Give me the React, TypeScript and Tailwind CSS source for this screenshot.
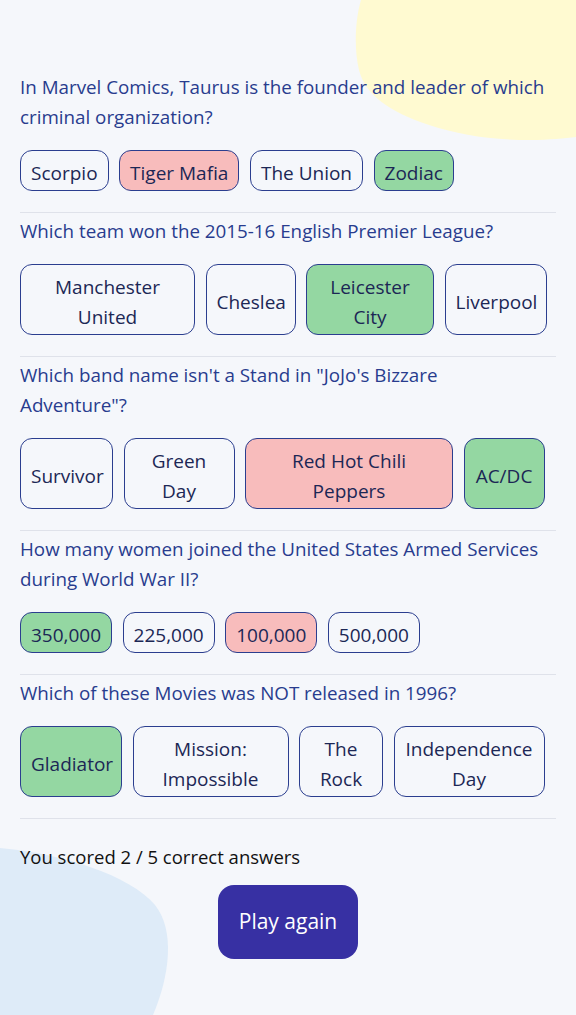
import React from "react";

type Answer = { text: string; state: "none" | "right" | "wrong"; w?: string };
type Question = { q: string[]; answers: Answer[] };

const questions: Question[] = [
  {
    q: ["In Marvel Comics, Taurus is the founder and leader of which criminal organization?"],
    answers: [
      { text: "Scorpio", state: "none" },
      { text: "Tiger Mafia", state: "wrong" },
      { text: "The Union", state: "none" },
      { text: "Zodiac", state: "right" },
    ],
  },
  {
    q: ["Which team won the 2015-16 English Premier League?"],
    answers: [
      { text: "Manchester\nUnited", state: "none", w: "w-[175px]" },
      { text: "Cheslea", state: "none", w: "w-[90px]" },
      { text: "Leicester\nCity", state: "right", w: "w-[128px]" },
      { text: "Liverpool", state: "none", w: "w-[102px]" },
    ],
  },
  {
    q: ["Which band name isn't a Stand in \"JoJo's Bizzare", "Adventure\"?"],
    answers: [
      { text: "Survivor", state: "none", w: "w-[93px]" },
      { text: "Green\nDay", state: "none", w: "w-[111px]" },
      { text: "Red Hot Chili\nPeppers", state: "wrong", w: "w-[208px]" },
      { text: "AC/DC", state: "right", w: "w-[81px]" },
    ],
  },
  {
    q: ["How many women joined the United States Armed Services during World War II?"],
    answers: [
      { text: "350,000", state: "right" },
      { text: "225,000", state: "none" },
      { text: "100,000", state: "wrong" },
      { text: "500,000", state: "none" },
    ],
  },
  {
    q: ["Which of these Movies was NOT released in 1996?"],
    answers: [
      { text: "Gladiator", state: "right", w: "w-[102px]" },
      { text: "Mission:\nImpossible", state: "none", w: "w-[156px]" },
      { text: "The\nRock", state: "none", w: "w-[84px]" },
      { text: "Independence\nDay", state: "none", w: "w-[151px]" },
    ],
  },
];

const stateBg: Record<Answer["state"], string> = {
  none: "bg-transparent",
  right: "bg-[#94d7a2]",
  wrong: "bg-[#f8bcbc]",
};

export default function App() {
  return (
    <div className="relative min-h-[1015px] overflow-hidden bg-[#f5f7fb] font-['Open_Sans','Noto_Sans',sans-serif]">
      <svg
        className="absolute right-0 top-0"
        width="226"
        height="145"
        viewBox="0 0 226 145"
        aria-hidden="true"
      >
        <path
          d="M11,0 C5,20 4,50 9,70 C15,95 40,112 79,125 C110,135 140,140 180,140 C200,140 215,138 226,137 L226,0 Z"
          fill="#fffad1"
        />
      </svg>
      <svg
        className="absolute bottom-0 left-0"
        width="180"
        height="170"
        viewBox="0 0 180 170"
        aria-hidden="true"
      >
        <path
          d="M0,3 C60,8 130,30 155,60 C175,85 170,130 153,170 L0,170 Z"
          fill="#deebf8"
        />
      </svg>

      <main className="relative px-5 pt-[72px]">
        {questions.map((q, i) => (
          <section
            key={i}
            className={`border-b border-[#dfe2ea] pb-[21px] ${i === 0 ? "" : "pt-[3px]"}`}
          >
            <h2 className="text-[18.8px] font-normal leading-[30px] text-[#283c8e]">
              {q.q.map((line, j) => (
                <React.Fragment key={j}>
                  {j > 0 && <br />}
                  {line}
                </React.Fragment>
              ))}
            </h2>
            <div className="mt-[18px] flex gap-[10.5px]">
              {q.answers.map((a) => (
                <button
                  key={a.text}
                  className={`${a.w ?? ""} shrink-0 whitespace-pre-line rounded-[12px] border border-[#2b3e8f] px-[10px] pb-[2.5px] pt-[6.5px] text-center text-[19px] leading-[30px] text-[#1c2755] ${stateBg[a.state]}`}
                >
                  {a.text}
                </button>
              ))}
            </div>
          </section>
        ))}

        <p className="pt-[24px] text-[18.5px] leading-[27px] text-[#111111]">
          You scored 2 / 5 correct answers
        </p>
        <div className="mt-[15px] flex justify-center">
          <button className="h-[74px] w-[140px] rounded-[16px] bg-[#3730a3] text-[21px] text-white">
            Play again
          </button>
        </div>
      </main>
    </div>
  );
}
